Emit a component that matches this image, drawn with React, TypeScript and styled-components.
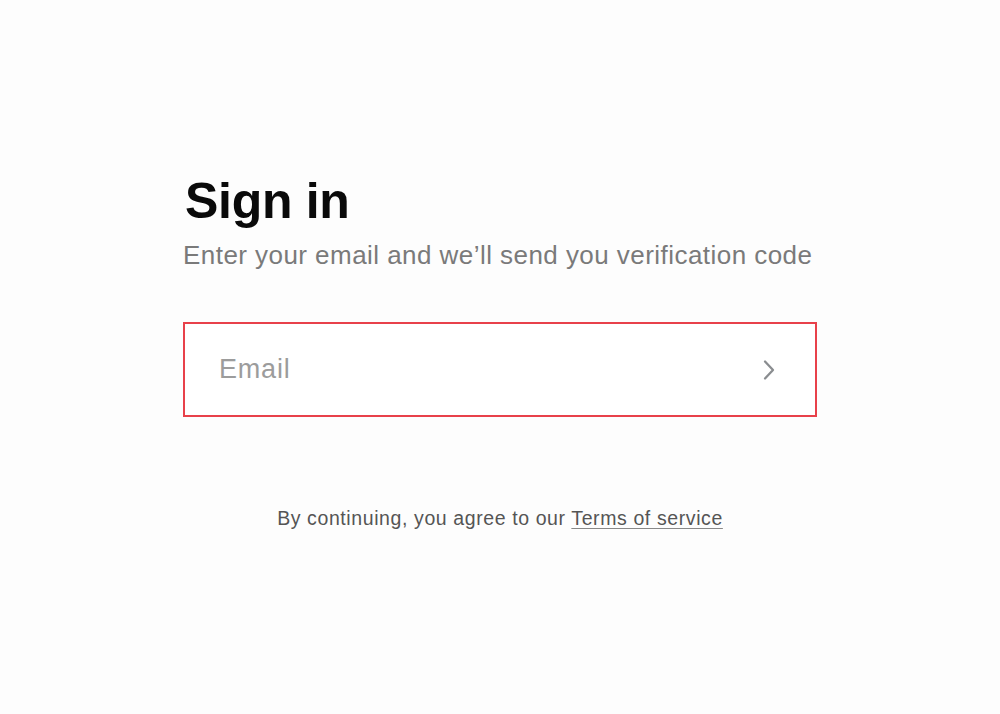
import React from "react";
import styled, { createGlobalStyle } from "styled-components";

const GlobalStyle = createGlobalStyle`
  html, body {
    margin: 0;
    padding: 0;
    background: #fdfdfd;
    font-family: "Liberation Sans", Arial, Helvetica, sans-serif;
  }
`;

const Page = styled.main`
  width: 1000px;
  height: 714px;
  display: flex;
  justify-content: center;
  background: #fdfdfd;
`;

const Card = styled.section`
  width: 634px;
  padding-top: 172px;
  display: flex;
  flex-direction: column;
`;

const Title = styled.h1`
  margin: 0 0 0 2px;
  font-size: 50px;
  line-height: 58px;
  font-weight: 700;
  color: #0a0a0a;
  letter-spacing: -0.3px;
`;

const Subtitle = styled.p`
  margin: 10px 0 0 0;
  font-size: 26px;
  line-height: 30px;
  letter-spacing: 0.45px;
  color: #7a7a7a;
  white-space: nowrap;
`;

const Field = styled.label`
  margin-top: 52px;
  height: 95px;
  box-sizing: border-box;
  border: 2px solid #e8414a;
  background: #ffffff;
  display: flex;
  align-items: center;
  padding: 0 39px 0 32px;
`;

const Input = styled.input`
  flex: 1;
  border: none;
  outline: none;
  background: transparent;
  font-family: inherit;
  font-size: 27px;
  letter-spacing: 0.8px;
  color: #222;

  &::placeholder {
    color: #9c9c9c;
  }
`;

const Arrow = styled.button`
  border: none;
  background: none;
  padding: 0;
  display: flex;
  color: #8a8d90;
`;

const Footer = styled.p`
  margin: 90px 0 0 0;
  text-align: center;
  font-size: 19.5px;
  line-height: 22px;
  letter-spacing: 0.6px;
  color: #555;
  white-space: nowrap;
`;

const TermsLink = styled.a`
  color: #555;
  text-decoration: underline;
  text-decoration-color: #888;
  text-underline-offset: 3px;
`;

export default function App() {
  return (
    <>
      <GlobalStyle />
      <Page>
        <Card>
          <Title>Sign in</Title>
          <Subtitle>Enter your email and we’ll send you verification code</Subtitle>
          <Field>
            <Input type="email" placeholder="Email" />
            <Arrow aria-label="Continue">
              <svg width="14" height="22" viewBox="0 0 14 22" fill="none">
                <path d="M3 2.5l8 8.5-8 8.5" stroke="currentColor" strokeWidth="2.3" strokeLinecap="round" strokeLinejoin="round" />
              </svg>
            </Arrow>
          </Field>
          <Footer>
            By continuing, you agree to our <TermsLink href="#">Terms of service</TermsLink>
          </Footer>
        </Card>
      </Page>
    </>
  );
}
